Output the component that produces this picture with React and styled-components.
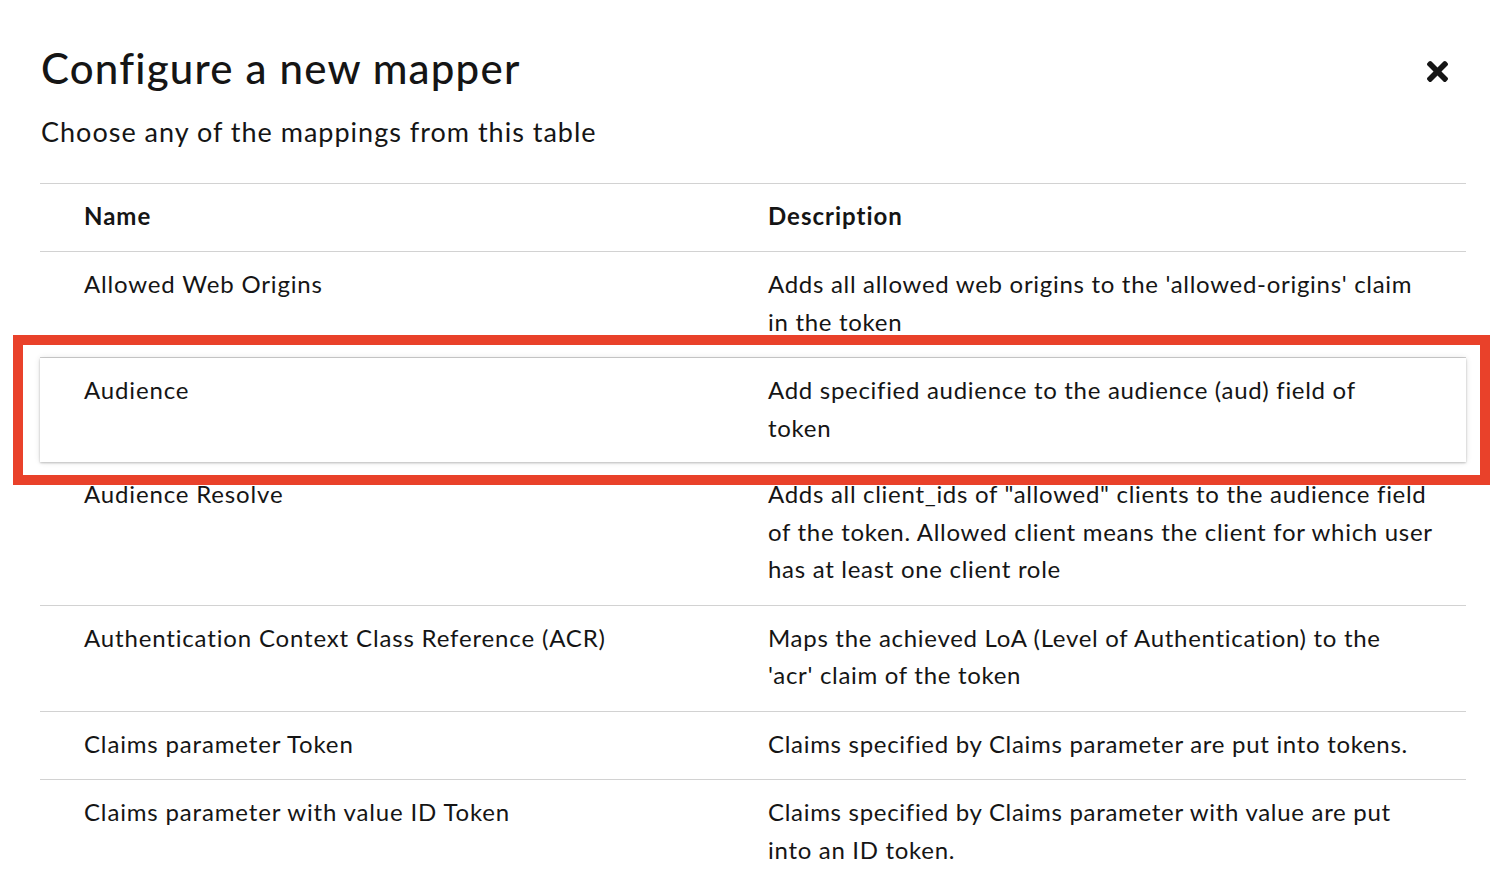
import styled, { createGlobalStyle } from "styled-components";

const GlobalStyle = createGlobalStyle`
    body {
        margin: 0;
        background: #ffffff;
        font-family: Lato, "Noto Sans", sans-serif;
        color: #151515;
    }
`

// descriptions are kept as the lines shown in the table
const mappers = [
    {
        name: "Allowed Web Origins",
        description: ["Adds all allowed web origins to the 'allowed-origins' claim", "in the token"],
    },
    {
        name: "Audience",
        description: ["Add specified audience to the audience (aud) field of", "token"],
        selected: true,
    },
    {
        name: "Audience Resolve",
        description: [
            "Adds all client_ids of \"allowed\" clients to the audience field",
            "of the token. Allowed client means the client for which user",
            "has at least one client role",
        ],
    },
    {
        name: "Authentication Context Class Reference (ACR)",
        description: ["Maps the achieved LoA (Level of Authentication) to the", "'acr' claim of the token"],
    },
    {
        name: "Claims parameter Token",
        description: ["Claims specified by Claims parameter are put into tokens."],
    },
    {
        name: "Claims parameter with value ID Token",
        description: ["Claims specified by Claims parameter with value are put", "into an ID token."],
    },
];

function CloseIcon() {
    return (
        <svg width="21" height="21" viewBox="0 80 352 352" fill="currentColor" aria-hidden="true">
            <path d="M242.72 256l100.07-100.07c12.28-12.28 12.28-32.19 0-44.48l-22.24-22.24c-12.28-12.28-32.19-12.28-44.48 0L176 189.28 75.93 89.21c-12.28-12.28-32.19-12.28-44.48 0L9.21 111.45c-12.28 12.28-12.28 32.19 0 44.48L109.28 256 9.21 356.07c-12.28 12.28-12.28 32.19 0 44.48l22.24 22.24c12.28 12.28 32.2 12.28 44.48 0L176 322.72l100.07 100.07c12.28 12.28 32.2 12.28 44.48 0l22.24-22.24c12.28-12.28 12.28-32.19 0-44.48L242.72 256z" />
        </svg>
    );
}

export default function App() {
    return (
        <>
            <GlobalStyle />
            <Modal>
                <Header>
                    <Title>Configure a new mapper</Title>
                    <CloseButton aria-label="Close">
                        <CloseIcon />
                    </CloseButton>
                </Header>
                <Subtitle>Choose any of the mappings from this table</Subtitle>

                <Table>
                    <HeadRow>
                        <HeadCell>Name</HeadCell>
                        <HeadCell>Description</HeadCell>
                    </HeadRow>
                    {mappers.map((m) => (
                        <Row key={m.name} $selected={m.selected}>
                            <NameCell>{m.name}</NameCell>
                            <DescCell>
                                {m.description.map((line) => (
                                    <Line key={line}>{line}</Line>
                                ))}
                            </DescCell>
                            {m.selected && <Highlight />}
                        </Row>
                    ))}
                </Table>
            </Modal>
        </>
    );
}

const Modal = styled.div`
    padding: 40px 40px 0 40px;
`

const Header = styled.div`
    display: flex;
    justify-content: space-between;
    align-items: center;
    height: 56px;
`

const Title = styled.h1`
    margin: 0 0 0 1px;
    font-size: 42px;
    line-height: 54px;
    font-weight: 500;
    letter-spacing: 1.2px;
`

const CloseButton = styled.button`
    display: flex;
    align-items: center;
    justify-content: center;
    width: 40px;
    height: 40px;
    margin: 6px 9px 0 0;
    padding: 0;
    border: none;
    background: transparent;
    color: #151515;
    cursor: pointer;
`

const Subtitle = styled.p`
    margin: 18px 0 0 1px;
    font-size: 27px;
    line-height: 36px;
    letter-spacing: 1px;
`

const Table = styled.div`
    margin-top: 33px;
    border-top: 1px solid #d2d2d2;
`

const HeadRow = styled.div`
    display: grid;
    grid-template-columns: 728px 1fr;
    padding: 13px 0 17px;
    border-bottom: 1px solid #d2d2d2;
`

const HeadCell = styled.div`
    font-size: 24px;
    line-height: 37px;
    font-weight: 700;
    letter-spacing: 1px;
    padding-left: 44px;

    & + & {
        padding-left: 0;
    }
`

const Row = styled.div`
    position: relative;
    display: grid;
    grid-template-columns: 728px 1fr;
    padding: ${(p) => (p.$selected ? "13px 0 16px" : "13px 0 17px")};
    border-bottom: ${(p) => (p.$selected ? "none" : "1px solid #d2d2d2")};
    background: #ffffff;
    z-index: ${(p) => (p.$selected ? 1 : 0)};
    box-shadow: ${(p) =>
        p.$selected
            ? "0 1px 2px rgba(3, 3, 3, 0.22), 0 0 6px rgba(3, 3, 3, 0.12)"
            : "none"};

    &:last-child {
        border-bottom: none;
    }
`

const NameCell = styled.div`
    padding-left: 44px;
    font-size: 24px;
    line-height: 37.5px;
    letter-spacing: 0.84px;
`

const DescCell = styled.div`
    padding-right: 16px;
    font-size: 24px;
    line-height: 37.5px;
    letter-spacing: 0.7px;
`

const Line = styled.span`
    display: block;
`

const Highlight = styled.div`
    position: absolute;
    top: -23px;
    left: -27px;
    right: -24px;
    bottom: -23px;
    border: 10px solid #e9412a;
    pointer-events: none;
`
